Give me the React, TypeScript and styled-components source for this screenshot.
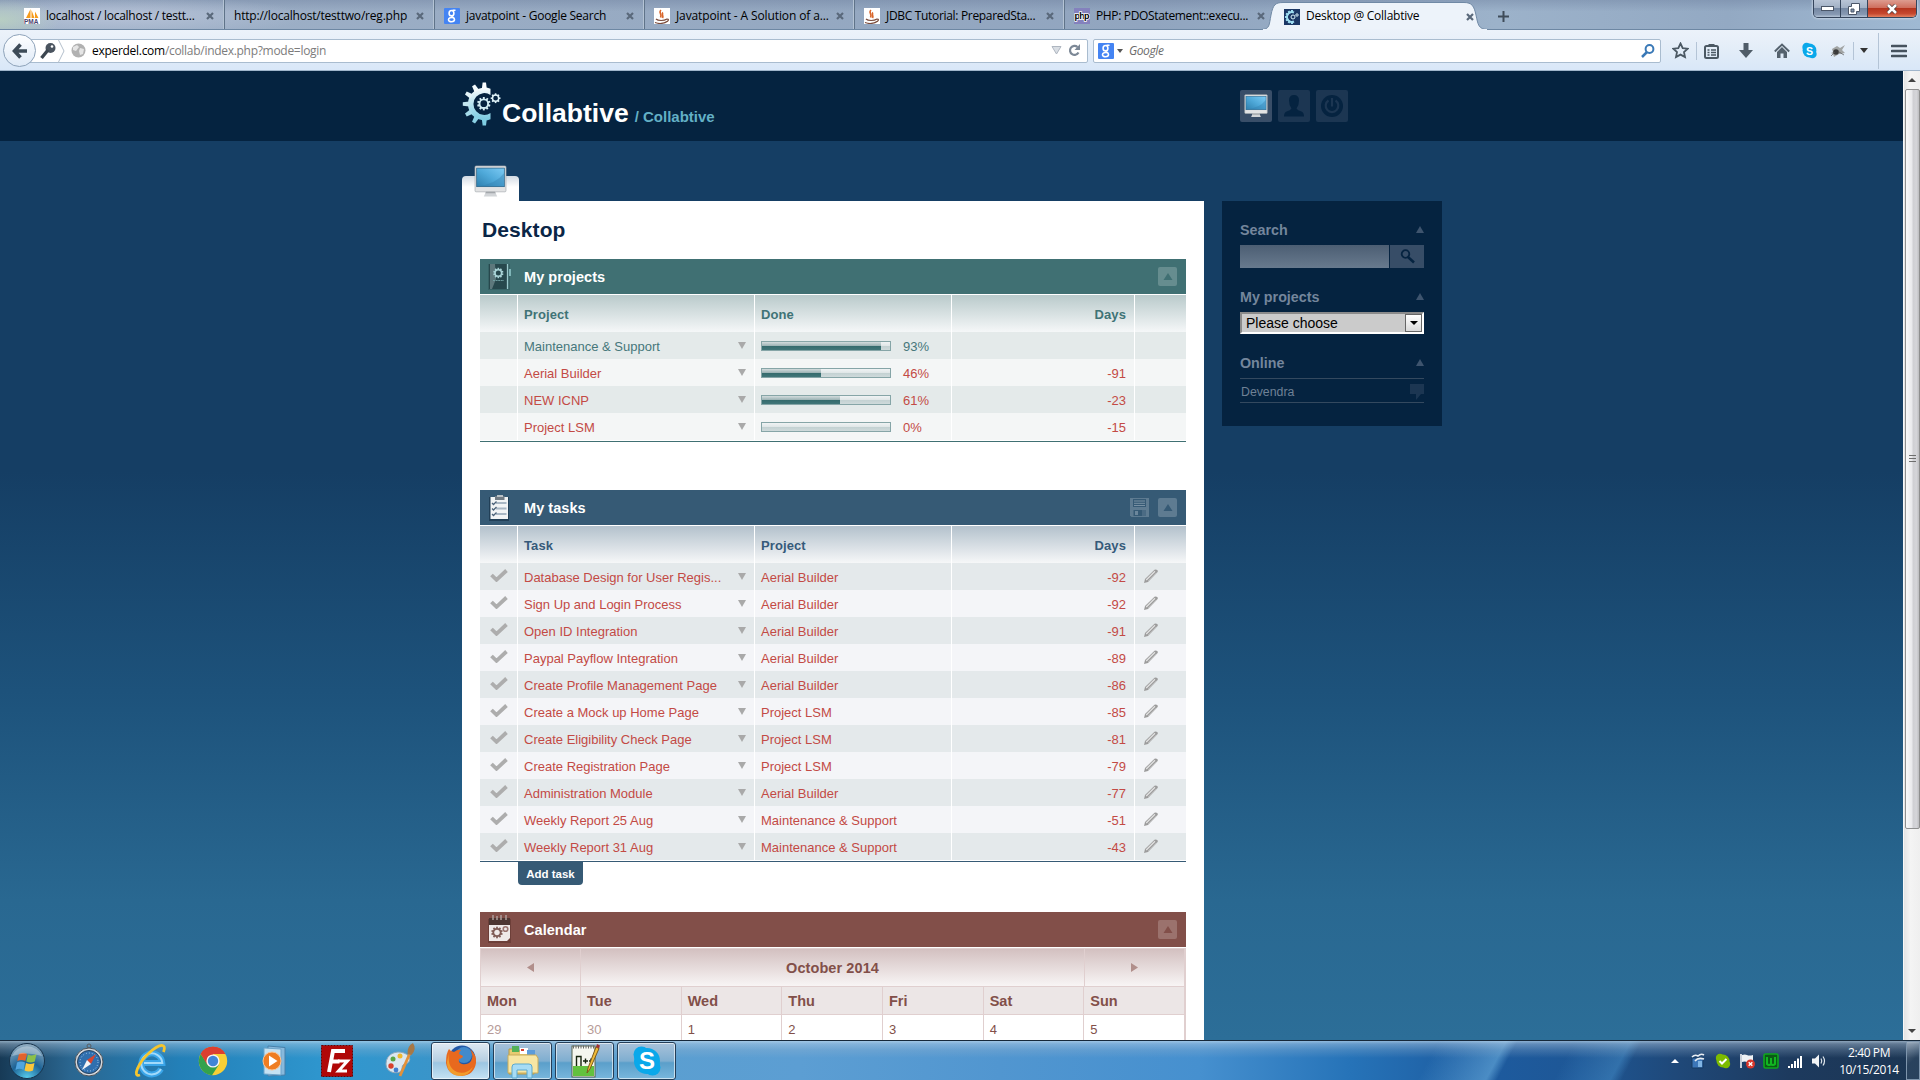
import React from "react";
import styled, { createGlobalStyle } from "styled-components";

const Global = createGlobalStyle`
  *, *::before, *::after { box-sizing: border-box; }
  html, body { margin: 0; padding: 0; overflow: hidden; }
  body { font-family: "Liberation Sans", Arial, sans-serif; font-size: 13px; }
  svg { display: block; flex: none; }
`;

const ui = `"Open Sans", "Noto Sans", sans-serif`;

const Screen = styled.div`
  width: 1920px; height: 1080px; overflow: hidden;
  display: flex; flex-direction: column;
`;

/* ---------- browser chrome ---------- */

const TabStrip = styled.div`
  height: 30px; flex: none; display: flex; position: relative;
  background:
    radial-gradient(ellipse 60px 22px at 0 20px, rgba(190,215,190,.7), transparent),
    radial-gradient(ellipse 190px 20px at 120px 16px, rgba(190,200,220,.75), transparent),
    linear-gradient(180deg, rgba(100,118,150,.35), rgba(100,118,150,0) 40%),
    linear-gradient(90deg, #9fb1c8 0, #98abc3 30%, #91a5bf 60%, #9cb2ca 78%, #93a9c3 90%, #9fb9d3 100%);
  border-bottom: 1px solid #6d87a3;
  padding-left: 15px;
`;
const Tab = styled.div`
  width: 210px; height: 29px; padding: 3px 10px 0 9px; display: flex; align-items: center;
  font: 12px ${ui}; color: #000; border-right: 1px solid #5f7389;
  box-shadow: inset -2px 0 0 -1px #b4c3d4;
`;
const LastTab = styled(Tab)`border-right: 0; box-shadow: none;`;
const ActiveTab = styled.div`
  width: 223px; height: 30px; margin-left: -6px; padding: 3px 0 0 15px; display: flex; align-items: center;
  position: relative; font: 12px ${ui}; color: #000;
`;
const ActiveShape = styled.svg`position: absolute; left: -8px; top: 1px;`;
const ActiveIcon = styled.svg`position: relative;`;
const TabText = styled.span<{ $ls?: number; $bare?: boolean }>`
  flex: 1; white-space: nowrap; padding: 0 0 2px ${p => (p.$bare ? 0 : 6)}px; position: relative; overflow: hidden;
  letter-spacing: ${p => p.$ls ?? -0.25}px;
`;
const TabClose = styled.svg`position: relative;`;
const NewTab = styled.div`display: flex; align-items: center; padding: 3px 0 0 6px;`;
const WinButtons = styled.div`
  margin-left: auto; margin-right: 3px; display: flex; width: 104px; height: 18px;
  border: 1px solid #35455c; border-top: 0; border-radius: 0 0 5px 5px; overflow: hidden;
  box-shadow: 0 0 2px 1px rgba(220,230,240,.6);
`;
const WinButton = styled.div<{ $w: number; $close?: boolean }>`
  width: ${p => p.$w}px; display: flex; align-items: center; justify-content: center;
  border-right: 1px solid #35455c;
  background: ${p => p.$close
    ? "linear-gradient(180deg,#dd9c90 0,#cf6f5e 45%,#b5351f 50%,#c6482f 80%,#e38161 100%)"
    : "linear-gradient(180deg,#b9c5d6 0,#a2b1c6 45%,#7588a3 50%,#8799b2 85%,#b5c4d7 100%)"};
  &:last-child { border-right: 0; }
`;

const Toolbar = styled.div`
  height: 41px; flex: none; display: flex; align-items: center; padding: 1px 0 0 3px;
  background: linear-gradient(180deg, #ecf2fa 0, #e3edf8 50%, #d9e7f8 100%);
  border-bottom: 1px solid #a0b5cb;
`;
const BackButton = styled.div`
  width: 33px; height: 33px; border-radius: 50%; border: 1px solid #8ea3ba; z-index: 1;
  background: linear-gradient(180deg,#fdfeff,#dfeaf7); display: flex; align-items: center; justify-content: center;
  flex: none;
`;
const UrlBar = styled.div`
  margin-left: -9px; width: 1061px; height: 24px; background: #fff; border: 1px solid #a9bccf;
  border-radius: 0 2px 2px 0; display: flex; align-items: center; padding-left: 11px; flex: none;
`;
const UrlText = styled.div`
  font: 12px ${ui}; color: #7c7c7c; letter-spacing: -0.29px; white-space: nowrap; padding-left: 6px; flex: 1;
  b { color: #000; font-weight: 400; }
`;
const SearchBox = styled.div`
  margin-left: 5px; width: 568px; height: 24px; background: #fff; border: 1px solid #a9bccf; border-radius: 2px;
  display: flex; align-items: center; padding: 0 5px 0 4px; flex: none;
`;
const SearchHint = styled.span`font: italic 12px ${ui}; color: #6c6c6c; flex: 1; padding-left: 6px; letter-spacing: -0.4px;`;
const Tools = styled.div`display: flex; align-items: center; flex: 1; padding-left: 11px; height: 38px;`;
const Sep = styled.i<{ $h: number; $l: number; $r: number }>`
  width: 1px; height: ${p => p.$h}px; margin: 0 ${p => p.$r}px 0 ${p => p.$l}px; background: #b4c4d6; flex: none;
`;
const Gap = styled.i<{ $w: number }>`width: ${p => p.$w}px; flex: none;`;

/* ---------- page ---------- */

const Viewport = styled.div`height: 969px; flex: none; display: flex; overflow: hidden;`;
const Page = styled.div`
  width: 1903px; height: 969px; overflow: hidden; flex: none;
  background: linear-gradient(180deg, #153e64 0, #153e64 400px, #1d527b 620px, #296891 830px, #2c6e98 969px);
`;
const Header = styled.header`
  height: 70px; background: #052340; display: flex; padding: 0 555px 0 462px; justify-content: space-between;
`;
const Brand = styled.div`display: flex; height: 70px; padding-top: 11px; align-items: flex-start;`;
const BrandWords = styled.div`display: flex; align-items: baseline; padding-top: 13px;`;
const BrandName = styled.div`
  font-weight: 700; font-size: 26.5px; line-height: 36px; color: #fff; margin-left: 1px;
`;
const BrandSub = styled.div`font-weight: 700; font-size: 15px; color: #63b0c6; margin-left: 6px;`;
const NavIcons = styled.nav`display: flex; gap: 6px; padding-top: 19px;`;
const NavIcon = styled.div<{ $on?: boolean }>`
  width: 32px; height: 32px; border-radius: 2px; background: ${p => (p.$on ? "#394e68" : "#1c3652")};
  display: flex; align-items: center; justify-content: center;
`;
const Columns = styled.div`display: flex; padding: 24px 0 0 462px; gap: 18px; align-items: flex-start;`;
const Main = styled.main`width: 742px; padding-top: 11px;`;
const PageTab = styled.div`
  width: 57px; height: 25px; border-radius: 4px 4px 0 0; background: linear-gradient(180deg,#d3dbe4,#fff 11px);
  padding-left: 12px;
  svg { position: relative; top: -11px; }
`;
const Panel = styled.div`background: #fff; height: 900px; padding: 16px 18px 0;`;
const PageTitle = styled.h1`margin: 0; padding-left: 2px; font-size: 21px; line-height: 26px; height: 42px; color: #0a2647; letter-spacing: .1px;`;

type Theme = { bar: string; text: string; top: string; bottom: string; odd: string; even: string; btn: string };
const teal: Theme = { bar: "#407073", text: "#407376", top: "#b9cacb", bottom: "#f5f7f8", odd: "#e4eaea", even: "#f4f6f6", btn: "#668d8f" };
const blue: Theme = { bar: "#365a75", text: "#365a7a", top: "#b3c1cc", bottom: "#f6f7f8", odd: "#e4e9eb", even: "#f4f5f8", btn: "#5e7b91" };
const brown: Theme = { bar: "#824f49", text: "#824f49", top: "#d3c0c0", bottom: "#f8f5f5", odd: "#ece6e6", even: "#fff", btn: "#9b726d" };

const Block = styled.section<{ $mb: number }>`margin-bottom: ${p => p.$mb}px;`;
const BlockBar = styled.div<{ $t: Theme }>`
  height: 35px; background: ${p => p.$t.bar}; display: flex; align-items: center; padding: 0 9px 0 4px;
`;
const BlockTitle = styled.h2`
  margin: 0; flex: 1; font-size: 14.5px; line-height: 33px; color: #fff; padding: 2px 0 0 8px; letter-spacing: .05px;
`;
const SquareBtn = styled.div<{ $t: Theme }>`
  width: 19px; height: 19px; border-radius: 2px; background: ${p => p.$t.btn}; margin-left: 9px;
  display: flex; align-items: center; justify-content: center;
`;
const Grid = styled.div<{ $t: Theme }>`margin-top: 1px; padding-bottom: 1px; border-bottom: 1px solid ${p => p.$t.bar};`;
const cols = `display: grid; grid-template-columns: 37px 236px 196px 182px 51px; gap: 0 1px;`;
const HeadRow = styled.div`${cols} height: 37px;`;
const HeadCell = styled.div<{ $t: Theme; $right?: boolean }>`
  background: linear-gradient(180deg, ${p => p.$t.top}, ${p => p.$t.bottom});
  color: ${p => p.$t.text}; font-weight: 700; line-height: 37px; padding: 1px 8px 0 6px; letter-spacing: .1px;
  text-align: ${p => (p.$right ? "right" : "left")}; height: 37px;
`;
const Row = styled.div`${cols} height: 27px;`;
const Cell = styled.div<{ $bg: string; $c: string; $center?: boolean }>`
  background: ${p => p.$bg}; color: ${p => p.$c}; height: 27px; display: flex; align-items: center;
  padding: ${p => (p.$center ? "0 0 3px 1px" : "0 8px 0 6px")}; justify-content: ${p => (p.$center ? "center" : "flex-start")};
`;
const CellText = styled.span<{ $end?: boolean }>`
  line-height: 25px; padding-top: 2px; white-space: nowrap; margin-left: ${p => (p.$end ? "auto" : "0")};
`;
const Caret = styled.i`
  margin: -1px 0 0 auto; border: solid transparent; border-width: 7px 4.5px 0; border-top-color: #a9a9a9;
`;
const PencilCell = styled(Cell)`padding: 0 0 2px 9px;`;
const Bar = styled.div`
  width: 130px; height: 10px; border: 1px solid #86a5a7; margin-right: 12px;
  background: linear-gradient(180deg, #f0f3f4 0, #dfe6e7 50%, #c3d1d2 51%, #cfdadb 100%);
`;
const BarFill = styled.div`height: 8px; background: linear-gradient(180deg, #d3dcdd 0, #9bb2b4 48%, #346a6c 50%, #417679 100%);`;
const AddTask = styled.div`
  margin-left: 38px; width: 65px; height: 23px; background: #365a75; border-radius: 0 0 4px 4px;
  color: #fff; font-weight: 700; font-size: 11.5px; line-height: 24px; text-align: center;
`;
const CalTable = styled.div`margin-top: 1px; border: 1px solid #e0cfcf; height: 120px; border-right-width: 2px;`;
const MonthRow = styled.div`
  display: grid; grid-template-columns: 99px 1fr 100px; height: 38px; border-bottom: 1px solid #e0cfcf;
  background: linear-gradient(180deg,#d3c0c0,#f8f5f5);
`;
const MonthCell = styled.div`
  display: flex; align-items: center; justify-content: center; font-weight: 700; font-size: 14.5px; color: #824f49;
  border-left: 1px solid #e0cfcf; letter-spacing: .08px; &:first-child { border-left: 0; }
`;
const Week = styled.div<{ $head?: boolean }>`
  display: grid; grid-template-columns: 99px repeat(6, 1fr); height: 28px;
  background: ${p => (p.$head ? "#ece6e6" : "#fff")};
  border-bottom: ${p => (p.$head ? "1px solid #e0cfcf" : "0")};
`;
const Day = styled.div<{ $head?: boolean; $dim?: boolean }>`
  padding: 1px 0 0 6px; line-height: 27px; border-left: 1px solid #e0cfcf; &:first-child { border-left: 0; }
  height: ${p => (p.$head ? 27 : 60)}px;
  font-weight: ${p => (p.$head ? 700 : 400)}; font-size: ${p => (p.$head ? 14.5 : 13)}px;
  color: ${p => (p.$dim ? "#b79c99" : "#824f49")};
`;

const Side = styled.aside`
  margin-top: 36px; width: 220px; height: 225px; background: #052340; padding: 17px 18px 0; color: #74869c;
`;
const SideHead = styled.div<{ $h: number }>`
  display: flex; justify-content: space-between; align-items: center; height: ${p => p.$h}px;
  font-weight: 700; font-size: 14.3px; line-height: 22px; padding-bottom: 3px;
`;
const UpMark = styled.i`border: solid transparent; border-width: 0 4.5px 7px; border-bottom-color: #3e546e; margin: 0 0 2px;`;
const SearchLine = styled.div`display: flex; gap: 1px; height: 23px; margin-bottom: 17px;`;
const SideInput = styled.div`width: 149px; background: linear-gradient(180deg,#4c5e73,#687a8e);`;
const SideGo = styled.div`width: 34px; background: #374d67; display: flex; align-items: center; justify-content: center;`;
const Select = styled.div`
  height: 22px; background: #cbcbcb; border: 2px solid; border-color: #8b8b8b #fff #fff #8b8b8b; color: #000;
  display: flex; align-items: center; justify-content: space-between; font-size: 14px; padding-left: 4px; margin-bottom: 17px;
`;
const SelectBtn = styled.div`
  width: 17px; height: 18px; background: linear-gradient(180deg,#fff,#d9d9d9); border: 1px solid #666;
  display: flex; align-items: center; justify-content: center;
`;
const User = styled.div`
  border: solid #34495f; border-width: 1px 0; height: 25px; display: flex; align-items: center; justify-content: space-between;
  font-size: 12.3px; color: #6f8196; padding: 2px 0 0 1px;
`;

const Scroll = styled.div`
  width: 17px; background: linear-gradient(90deg,#e4e4e4,#f4f4f4 40%,#efefef); display: flex; flex-direction: column; align-items: center;
  border-left: 1px solid #f8f8f8;
`;
const ScrollEnd = styled.div`height: 18px; display: flex; align-items: center;`;
const Thumb = styled.div`
  width: 15px; height: 740px; border: 1px solid #8f8f8f; border-radius: 2px;
  background: linear-gradient(90deg,#fafafa 0,#e9e9ec 45%,#cfcfd3 55%,#d5d5d9 80%,#bdbdc0 100%);
  display: flex; align-items: center; justify-content: center;
`;
const ScrollSpace = styled.div`flex: 1;`;

/* ---------- taskbar ---------- */

const TaskBar = styled.div`
  height: 40px; flex: none; display: flex; align-items: center; border-top: 1px solid #16283a;
  background:
    linear-gradient(180deg, rgba(200,222,240,.65) 0, rgba(190,210,230,.42) 3px, rgba(160,185,210,.25) 9px, transparent 17px),
    linear-gradient(118deg, transparent 1270px, rgba(120,190,235,.5) 1330px, transparent 1340px, transparent 1390px, rgba(80,160,220,.4) 1440px, transparent 1450px),
    linear-gradient(90deg, #173a56 0, #2a6690 70px, #2380b8 180px, #2f97cf 330px, #3c94c8 460px, #5a9fd0 600px, #5c9ed3 800px, #5196d0 1000px, #4690cf 1200px, #2673b8 1350px, #1d5b9f 1480px, #1e5796 1580px, #1f4878 1680px, #1d3a5e 1790px, #1c3653 1920px);
`;
const Launch = styled.div<{ $w: number }>`width: ${p => p.$w}px; display: flex; justify-content: center; align-items: center; flex: none;`;
const Running = styled.div<{ $on?: boolean }>`
  width: 59px; height: 38px; margin-right: 3px; border: 1px solid #243e58; border-radius: 3px; flex: none;
  box-shadow: inset 0 0 0 1px rgba(255,255,255,.6);
  background: ${p => (p.$on ? "linear-gradient(180deg,#dfe9f2 0,#b6cfe2 50%,#9cc6e2 55%,#c5e2f3 100%)" : "linear-gradient(180deg,#a9c2da 0,#7faed0 50%,#5b9fca 55%,#79b7dd 100%)")};
  display: flex; align-items: center; justify-content: center;
`;
const Tray = styled.div`margin-left: auto; display: flex; align-items: center; gap: 8px;`;
const Clock = styled.div`
  font: 12px ${ui}; color: #fff; text-align: center; line-height: 17px; letter-spacing: -0.4px; width: 68px; margin: 0 -5px 0 0; white-space: nowrap;
`;
const ShowDesktop = styled.div`
  width: 14px; height: 39px; border: 1px solid #7e95ad; background: linear-gradient(135deg, rgba(255,255,255,.3), rgba(255,255,255,.06) 50%);
`;

/* ---------- icons ---------- */

const CloseX = () => (
  <TabClose width="8" height="8" viewBox="0 0 8 8"><path d="M1 1l6 6M7 1L1 7" stroke="#5a697b" strokeWidth="2.2" /></TabClose>
);
const gearTeeth = (n: number, r: number, w: number, h: number, from = 0, to = 360) =>
  Array.from({ length: n }, (_, i) => from + ((to - from) * i) / (to - from === 360 ? n : n - 1)).map(a => (
    <rect key={a} x={-w / 2} y={-r} width={w} height={h} transform={`rotate(${a})`} />
  ));
const bigTeeth: [number, string][] = [
  [0, "#fafdfe"], [-30, "#f3fafc"], [-59, "#e3f3f8"], [-90, "#c3e6f0"], [-121, "#a4dbea"], [-150, "#8bd1e5"], [-180, "#7fcde2"],
];
const Gears = ({ size = 39 }: { size?: number }) => (
  <svg width={size} height={(size * 44) / 39} viewBox="0 0 39 44">
    <defs><linearGradient id="gg" gradientUnits="userSpaceOnUse" x1="0" y1="-17" x2="0" y2="17"><stop stopColor="#fafdfe" /><stop offset="1" stopColor="#76c9e0" /></linearGradient></defs>
    <g transform="translate(22.3 22)">
      <path d="M6.200 -15.200A16.400 16.400 0 1 0 6.200 15.200V9A10.900 10.900 0 1 1 6.200 -9Z" fill="url(#gg)" />
      {bigTeeth.map(([a, c]) => <path key={a} d="M-2.500 -15L-1.700 -21.500H1.700L2.500 -15Z" fill={c} transform={`rotate(${a})`} />)}
    </g>
    <g transform="translate(21.800 21.700)" fill="#d9eff5">{gearTeeth(10, 6.700, 1.900, 2.500)}<circle r="4.300" fill="none" stroke="#cdeaf2" strokeWidth="1.900" /></g>
    <g transform="translate(33.600 16.200)" fill="#dff2f7">{gearTeeth(8, 4.900, 1.600, 2)}<circle r="3.100" fill="none" stroke="#dff2f7" strokeWidth="1.500" /></g>
  </svg>
);
const Monitor = ({ s }: { s: number }) => (
  <svg width={s} height={s} viewBox="0 0 32 32">
    <defs><linearGradient id="mon" x1="0" y1="1" x2="1" y2="0"><stop stopColor="#2e7fae" /><stop offset=".5" stopColor="#4fa9d9" /><stop offset="1" stopColor="#7dcbf5" /></linearGradient></defs>
    <path d="M12 25h8l2.5 5.5h-13z" fill="#d2d5d8" /><path d="M12 25h8l1 2.5h-10z" fill="#a1a5a9" />
    <rect x="1" y="1" width="30" height="25" rx="1" fill="#e2e3e4" stroke="#a9aeb3" strokeWidth=".7" />
    <rect x="2.6" y="3" width="26.8" height="18" fill="url(#mon)" stroke="#245f85" strokeWidth=".7" />
    <path d="M3 20.5Q21 19 29 8V20.5z" fill="#2d78a8" opacity=".35" />
  </svg>
);
const Java = () => (
  <svg width="16" height="16" viewBox="0 0 16 16"><rect width="16" height="16" fill="#fff" />
    <path d="M7 2C4 4.5 8.5 6 6.5 9.5M9 4.5C7 6 10 7.5 8.5 10" stroke="#d9662b" strokeWidth="1.6" fill="none" />
    <path d="M2 11c2 2 8 2 11 0 2 0 2 2-1 3M1 14.5c4 1.5 9 1.2 13-1.5" stroke="#7a4b3b" strokeWidth="1.2" fill="none" /></svg>
);
const GoogleG = () => (
  <svg width="16" height="16" viewBox="0 0 16 16"><rect width="16" height="16" rx="1" fill="#4484f3" />
    <g fill="none" stroke="#fff" strokeWidth="1.6"><ellipse cx="7.5" cy="5.2" rx="2.4" ry="2.7" /><path d="M8.500 2.200h3M8.500 8c-2 1 2 1.200 2 3.400 0 3-6 3-6 .3 0-2 3-2.300 4-2" /></g></svg>
);
const Pma = () => (
  <svg width="16" height="16" viewBox="0 0 16 16"><rect width="16" height="16" fill="#fff" />
    <path d="M2 10L6.500 1v9zM7.500 10V2l3 8zM11 10V3.500l3.500 6.500z" fill="#f59b1c" />
    <text x="0" y="15.500" fontFamily="Liberation Sans" fontWeight="700" fontSize="6.500" fill="#4b4470">PMA</text></svg>
);
const Php = () => (
  <svg width="16" height="16" viewBox="0 0 16 16"><rect width="16" height="16" fill="#8481bd" />
    <text x="0.500" y="11" fontFamily="Liberation Sans" fontWeight="700" fontSize="9" textLength="15" fill="#000" stroke="#fff" strokeWidth="1.600" paintOrder="stroke">php</text></svg>
);
const SkypeS = ({ s, fs }: { s: number; fs: number }) => (
  <svg width={s} height={s} viewBox="0 0 32 32">
    <circle cx="16" cy="16" r="13" fill="#0aa8ea" /><circle cx="10.500" cy="9.500" r="8" fill="#0aa8ea" /><circle cx="21.500" cy="22.500" r="8" fill="#0aa8ea" />
    <text x="16" y="24" textAnchor="middle" fontFamily="Liberation Sans" fontWeight="700" fontSize={fs} fill="#fff">S</text>
  </svg>
);
const Check = () => (
  <svg width="18" height="13" viewBox="0 0 18 13"><path d="M1.500 6l5 4.800L16.500 1.500" fill="none" stroke="#adadad" strokeWidth="3.800" /></svg>
);
const Pencil = () => (
  <svg width="14" height="14" viewBox="0 0 14 14">
    <path d="M0 14l1-4L10.500.8Q12 0 13.200 1T13.200 3.500L4 13z" fill="#9c9c9c" />
    <path d="M2.200 11L11 2.300" stroke="#e2e2e2" strokeWidth="1.300" /><path d="M4 12l8.300-8.300" stroke="#bdbdbd" strokeWidth=".8" />
  </svg>
);
const BinderIcon = () => (
  <svg width="32" height="33" viewBox="0 0 32 33">
    <rect x="4" y="4" width="22" height="26" fill="#2b5357" opacity=".5" />
    <rect x="5" y="4" width="19" height="25" fill="#27484d" /><path d="M6 4h5l1 15L8 29H6z" fill="#6b8588" opacity=".8" />
    <path d="M23.500 4v25" stroke="#9bc9cc" strokeWidth="1.300" /><path d="M25 9h2v7h-2z" fill="#7fb5b8" />
    <g transform="translate(14.300 13)" fill="#a9d4d7">{gearTeeth(10, 5.200, 1.600, 2)}<circle r="3.300" fill="none" stroke="#a9d4d7" strokeWidth="1.600" /></g>
    <path d="M9 20.500h11" stroke="#6f9da0" strokeWidth="1.200" strokeDasharray="2 .6" />
  </svg>
);
const ClipIcon = () => (
  <svg width="32" height="33" viewBox="0 0 32 33">
    <rect x="5" y="6" width="20" height="24" fill="#18334a" opacity=".7" /><rect x="6.500" y="6" width="17.500" height="22" fill="#f2f4f5" />
    <path d="M11 5h9.500v4H11z" fill="#717b84" /><path d="M13 4h6v2h-6z" fill="#b9c0c5" />
    {[12, 17.500, 23].map(y => <g key={y}><path d={`M12 ${y}h10.500`} stroke="#a9b7c4" strokeWidth="2" /><path d={`M8 ${y}l1.500 1.500 3-3`} stroke="#4b6279" strokeWidth="1.300" fill="none" /></g>)}
  </svg>
);
const CalIcon = () => (
  <svg width="32" height="33" viewBox="0 0 32 33">
    <rect x="4" y="6" width="23" height="24" fill="#4d2824" opacity=".4" />
    <rect x="5" y="5" width="21" height="8" fill="#4d3532" /><path d="M5 12h21v13l-3 3H5z" fill="#efe9e9" />
    <path d="M9 2v5M13 3v4M17 2v5M22 2v5" stroke="#ad9e9c" strokeWidth="1.500" />
    <g transform="translate(13 19.500)" fill="#7f5a55">{gearTeeth(10, 5.800, 1.700, 2)}<circle r="3.700" fill="none" stroke="#7f5a55" strokeWidth="1.800" /></g>
    <circle cx="21.500" cy="16" r="2.300" fill="none" stroke="#9a7470" strokeWidth="1.600" />
  </svg>
);
const Floppy = () => (
  <svg width="19" height="19" viewBox="0 0 19 19"><path d="M0 0h19v19H1.500L0 17.500z" fill="#5e7b91" />
    <rect x="3" y="1" width="13" height="8" fill="#365a75" /><path d="M4 3h11M4 5.300h11M4 7.500h11" stroke="#7890a3" />
    <rect x="3.500" y="12" width="12" height="6" fill="#365a75" /><rect x="5" y="13" width="3" height="4" fill="#6b869b" /><rect x="12" y="12" width="3.500" height="6" fill="#4b6b84" /></svg>
);
const Tri = ({ d, c, w = 10, h = 7 }: { d: string; c: string; w?: number; h?: number }) => (
  <svg width={w} height={h} viewBox={`0 0 ${w} ${h}`}><path d={d} fill={c} /></svg>
);
const Folded = ({ t }: { t: Theme }) => <SquareBtn $t={t}><Tri d="M5 0L9.500 7H.5z" c={t.bar} /></SquareBtn>;

const StartOrb = () => (
  <svg width="38" height="38" viewBox="0 0 38 38">
    <defs><radialGradient id="orb" cx=".5" cy="1" r=".95"><stop stopColor="#5ad0ef" /><stop offset=".5" stopColor="#1d6396" /><stop offset="1" stopColor="#8ba9bf" /></radialGradient></defs>
    <circle cx="19" cy="19" r="17.500" fill="url(#orb)" stroke="#17334c" />
    <path d="M11 12q4-2.500 8 0l-1.700 7q-4-2-8 0z" fill="#e2622c" /><path d="M20 12.500q4 2 8.500-.5l-1.700 7.500q-4 2-8.500 0z" fill="#8cc04a" />
    <path d="M9 20.500q4-2 8 0L15.500 28q-4-2.500-8 0z" fill="#51a5e0" /><path d="M18 21q4 2 8.500 0L25 28.500q-4 2-8.500 0z" fill="#fbc63b" />
    <path d="M4 14A16 15 0 0 1 34 14Q19 9 4 14z" fill="#fff" opacity=".3" />
  </svg>
);
const Safari = () => (
  <svg width="32" height="38" viewBox="0 0 32 38"><circle cx="16" cy="4" r="2" fill="none" stroke="#595c60" /><circle cx="16" cy="20" r="14" fill="#d5d8dc" stroke="#4d5359" />
    <circle cx="16" cy="20" r="11.500" fill="#2f6fae" stroke="#26425f" /><circle cx="16" cy="20" r="9" fill="none" stroke="#a9cdee" strokeDasharray="1 2" />
    <path d="M23 12l-5 10-4-4z" fill="#d8452f" /><path d="M9 28l5-10 4 4z" fill="#f2f4f6" /></svg>
);
const IE = () => (
  <svg width="34" height="38" viewBox="0 0 34 38">
    <path d="M27 27a10.500 10.500 0 1 1 1.300-6H10" fill="none" stroke="#3aa5e8" strokeWidth="6" /><path d="M27 27a10.500 10.500 0 1 1 1.300-6H10" fill="none" stroke="#a2dafa" strokeWidth="2" />
    <path d="M6 33C-2 36 4 21 15 11S33 1 29.500 10" fill="none" stroke="#f5c52e" strokeWidth="2.800" /></svg>
);
const Chrome = () => (
  <svg width="30" height="38" viewBox="0 0 30 38"><g transform="translate(15 19)">
    <circle r="14.200" fill="#f7cf36" /><path d="M0 0L-12.300-7.100A14.200 14.200 0 0 1 12.300-7.100H0z" fill="#dc3f30" /><path d="M-12.300-7.100A14.200 14.200 0 0 0-1 14.200L6 3.500-5.500 3z" fill="#33a24c" />
    <path d="M-12.300-7.100L-5.500 4 0-7h12.300A14 14 0 0 0-12.300-7.100" fill="#dc3f30" /><circle r="6.600" fill="#f5f5f5" /><circle r="5.200" fill="#4185d6" /></g></svg>
);
const Wmp = () => (
  <svg width="32" height="34" viewBox="0 0 32 34"><path d="M9 2l17 1.500V31L9 32z" fill="#88b9dc" stroke="#477fa9" /><path d="M5 4l17 1v26L5 30z" fill="#c5e2f3" stroke="#6ca4ca" />
    <circle cx="13" cy="17" r="9" fill="#ef7d22" /><circle cx="13" cy="17" r="9" fill="none" stroke="#fbc291" /><path d="M10 11.500v11l8.500-5.500z" fill="#fff" /></svg>
);
const Filezilla = () => (
  <svg width="32" height="32" viewBox="0 0 32 32"><rect x=".5" y=".5" width="31" height="31" fill="#b00808" stroke="#6d0000" strokeDasharray="2 1" />
    <path d="M8 27L12 6h12M9.500 16.500h9" stroke="#fff" strokeWidth="4" fill="none" /><path d="M17 16h9.500L17.500 26H26" stroke="#fff" strokeWidth="3" fill="none" /></svg>
);
const Paint = () => (
  <svg width="34" height="38" viewBox="0 0 34 38"><path d="M3 22C3 12 13 8 21 11s7 10 1 11c-4 1-2 4-4 7S3 32 3 22z" fill="#dbe7f0" stroke="#8fa8bb" />
    <circle cx="8" cy="24" r="2.700" fill="#d8402c" /><circle cx="10" cy="17" r="2.500" fill="#5aa646" /><circle cx="17" cy="14" r="2.500" fill="#f0b92e" /><circle cx="13" cy="28" r="2.400" fill="#3f7fd0" />
    <path d="M17 34L27 11" stroke="#e3913a" strokeWidth="2.800" /><path d="M24.500 12Q24 4 30 1q4 6-1.500 12z" fill="#a77847" /></svg>
);
const Firefox = () => (
  <svg width="32" height="36" viewBox="0 0 32 36"><circle cx="17" cy="16" r="13.500" fill="#2257a5" /><circle cx="19" cy="12" r="8" fill="#4e9fdc" opacity=".7" />
    <path d="M4 6q2 3 5 3 4-3 7-2-2 2-2 4l4 2q0 2-4 3-1 4 3 5 6 1 9-3 3-5-1-12 7 6 6 14-2 12-14 13Q3 33 1 20 1 10 4 6z" fill="#e8691e" />
    <path d="M4 10q-2 15 8 19 9 3 16-5-4 9-13 9Q2 32 2 19z" fill="#f7b231" opacity=".7" /></svg>
);
const Explorer = () => (
  <svg width="34" height="36" viewBox="0 0 34 36"><path d="M3 6h7l2 2h14l2 3v20H3z" fill="#e7cb72" stroke="#b99a45" /><path d="M6 3h7v6H6z" fill="#53b158" /><path d="M14 5h8v6h-8z" fill="#fff" /><path d="M15 6h3v2h-3z" fill="#d5402f" /><path d="M21 7h8v5h-8z" fill="#5b9bda" />
    <path d="M2 12h28l2 3v15H2z" fill="#f7e6a4" stroke="#c9ab5a" /><path d="M6 35V24q0-3 3-3h14q3 0 3 3v11h-5v-8H11v8z" fill="#a7dcf5" stroke="#5ba9cf" /></svg>
);
const Notepad = () => (
  <svg width="30" height="38" viewBox="0 0 30 38"><rect x="2" y="4" width="23" height="31" fill="#f5f6ef" stroke="#56634f" /><path d="M3 24h21v10H3z" fill="#62c13f" /><path d="M3 5h21" stroke="#6b6b6b" strokeWidth="3" strokeDasharray="1 1.500" />
    <path d="M6.500 24V14.500h4.500V24M13 19h5M15.500 16.500v5M19 19h4M21 16.500v5" stroke="#16240f" strokeWidth="1.400" fill="none" /><path d="M17 31l1-5L26 5l3 1.500L20 27z" fill="#f0bb38" stroke="#7b5a1c" /><path d="M26 5l1-3 3 1.500-1 3z" fill="#a23231" /></svg>
);

const projects = [
  { n: "Maintenance & Support", p: 93, d: "", late: false },
  { n: "Aerial Builder", p: 46, d: "-91", late: true },
  { n: "NEW ICNP", p: 61, d: "-23", late: true },
  { n: "Project LSM", p: 0, d: "-15", late: true },
];
const tasks: [string, string, string][] = [
  ["Database Design for User Regis...", "Aerial Builder", "-92"],
  ["Sign Up and Login Process", "Aerial Builder", "-92"],
  ["Open ID Integration", "Aerial Builder", "-91"],
  ["Paypal Payflow Integration", "Aerial Builder", "-89"],
  ["Create Profile Management Page", "Aerial Builder", "-86"],
  ["Create a Mock up Home Page", "Project LSM", "-85"],
  ["Create Eligibility Check Page", "Project LSM", "-81"],
  ["Create Registration Page", "Project LSM", "-79"],
  ["Administration Module", "Aerial Builder", "-77"],
  ["Weekly Report 25 Aug", "Maintenance & Support", "-51"],
  ["Weekly Report 31 Aug", "Maintenance & Support", "-43"],
];
const late = "#c34a45";

const Head = ({ t, a, b }: { t: Theme; a: string; b: string }) => (
  <HeadRow>
    <HeadCell $t={t} /><HeadCell $t={t}>{a}</HeadCell><HeadCell $t={t}>{b}</HeadCell><HeadCell $t={t} $right>Days</HeadCell><HeadCell $t={t} />
  </HeadRow>
);

export default function App() {
  return (
    <Screen>
      <Global />
      <TabStrip>
        <Tab><Pma /><TabText>localhost / localhost / testt...</TabText><CloseX /></Tab>
        <Tab><TabText $bare $ls={-0.2}>http://localhost/testtwo/reg.php</TabText><CloseX /></Tab>
        <Tab><GoogleG /><TabText>javatpoint - Google Search</TabText><CloseX /></Tab>
        <Tab><Java /><TabText $ls={-0.12}>Javatpoint - A Solution of a...</TabText><CloseX /></Tab>
        <Tab><Java /><TabText $ls={-0.32}>JDBC Tutorial: PreparedSta...</TabText><CloseX /></Tab>
        <LastTab><Php /><TabText $ls={-0.35}>PHP: PDOStatement::execu...</TabText><CloseX /></LastTab>
        <ActiveTab>
          <ActiveShape width="233" height="29" viewBox="0 0 233 29">
            <path d="M0 28.500C9 28.500 8 24 10 14S14 1.500 22 1.500H203C211 1.500 213 5 215 14S217 28.500 227 28.500V29H0z" fill="#edf3fa" stroke="#7089a5" />
            <path d="M2 29h224" stroke="#ecf2fa" strokeWidth="2" />
          </ActiveShape>
          <ActiveIcon width="16" height="16" viewBox="0 0 16 16"><rect width="16" height="16" fill="#1b3765" /><g transform="translate(8 8)" fill="#9edcf0">{gearTeeth(7, 7, 2, 3, -180, 0)}<path d="M2-4.500A5 5 0 1 0 2 4.500" fill="none" stroke="#9edcf0" strokeWidth="2" /><circle r="2" cx="1" fill="none" stroke="#d8f2fa" /><circle cx="5" cy="-2" r="1.200" fill="none" stroke="#d8f2fa" /></g></ActiveIcon>
          <TabText>Desktop @ Collabtive</TabText>
          <CloseX /><Gap $w={18} />
        </ActiveTab>
        <NewTab><svg width="11" height="11" viewBox="0 0 11 11"><path d="M5.500 0v11M0 5.500h11" stroke="#3f4c5a" strokeWidth="2" /></svg></NewTab>
        <WinButtons>
          <WinButton $w={28}><svg width="13" height="5" viewBox="0 0 13 5"><rect x=".5" y=".5" width="12" height="4" fill="#fff" stroke="#4b5668" /></svg></WinButton>
          <WinButton $w={27}><svg width="12" height="12" viewBox="0 0 12 12"><path d="M3.500.5h8v8h-3v3h-8v-8h3z" fill="#fff" stroke="#4b5668" /><path d="M3 6h3v3H3z" fill="#8192ab" stroke="#4b5668" /></svg></WinButton>
          <WinButton $w={49} $close><svg width="12" height="10" viewBox="0 0 12 10"><path d="M2 1l8 8M10 1L2 9" stroke="#4b3a3a" strokeWidth="4" /><path d="M2 1l8 8M10 1L2 9" stroke="#fff" strokeWidth="2.500" /></svg></WinButton>
        </WinButtons>
      </TabStrip>

      <Toolbar>
        <BackButton><svg width="16" height="16" viewBox="0 0 16 16"><path d="M8.500 1.500L2.500 8l6 6.500M3 8h12" stroke="#3d4b58" strokeWidth="3.600" fill="none" /></svg></BackButton>
        <UrlBar>
          <svg width="18" height="18" viewBox="0 0 18 18"><circle cx="11.500" cy="6" r="5" fill="#4a545f" /><circle cx="13" cy="4.500" r="1.300" fill="#fff" /><path d="M9 8L2.500 16" stroke="#3c4650" strokeWidth="3.400" /></svg>
          <svg width="8" height="24" viewBox="0 0 8 24"><path d="M1 0l6 12-6 12" fill="none" stroke="#b3bfcb" /></svg>
          <Gap $w={6} />
          <svg width="15" height="15" viewBox="0 0 15 15"><circle cx="7.500" cy="7.500" r="7" fill="#b1b1b1" /><path d="M2 4l4-2 2 2-3 4-3-1zM9 5l4 1-1 5-3 1-1-4z" fill="#e5e5e5" /></svg>
          <UrlText><b>experdel.com</b>/collab/index.php?mode=login</UrlText>
          <svg width="11" height="9" viewBox="0 0 11 9"><path d="M1 .5h9L5.500 8z" fill="#d9dee4" stroke="#aeb6c0" /></svg>
          <Gap $w={6} />
          <svg width="13" height="13" viewBox="0 0 13 13"><path d="M10.500 8.500A4.500 4.500 0 1 1 9.500 3" fill="none" stroke="#7c8896" strokeWidth="2.200" /><path d="M12 0v6H6.500z" fill="#7c8896" /></svg>
          <Gap $w={6} />
        </UrlBar>
        <SearchBox>
          <GoogleG /><Gap $w={3} /><Tri w={6} h={4} d="M0 0h6L3 4z" c="#555" />
          <SearchHint>Google</SearchHint>
          <svg width="14" height="14" viewBox="0 0 14 14"><circle cx="8.500" cy="5" r="3.900" fill="none" stroke="#3a79b7" strokeWidth="2" /><path d="M6 8l-5 5" stroke="#3a79b7" strokeWidth="2.500" /></svg>
        </SearchBox>
        <Tools>
          <svg width="17" height="17" viewBox="0 0 17 17"><path d="M8.500 1.500l2.200 4.600 5 .6-3.700 3.400 1 5-4.500-2.500L4 15.100l1-5L1.300 6.700l5-.6z" fill="none" stroke="#4b5863" strokeWidth="1.800" /></svg>
          <Sep $h={18} $l={7} $r={7} />
          <svg width="15" height="16" viewBox="0 0 15 16"><rect x="1" y="3" width="13" height="12" rx="1.500" fill="none" stroke="#4b5863" strokeWidth="2" /><path d="M4.500 1h6v3h-6z" fill="#4b5863" /><path d="M3.500 7h2M7 7h5M3.500 9.500h2M7 9.500h5M3.500 12h2M7 12h5" stroke="#4b5863" strokeWidth="1.300" /></svg>
          <Gap $w={20} />
          <svg width="14" height="15" viewBox="0 0 14 15"><path d="M4.500 0h5v7H14l-7 8-7-8h4.500z" fill="#4f5c68" /></svg>
          <Gap $w={21} />
          <svg width="16" height="15" viewBox="0 0 16 15"><path d="M.8 8.500L8 1.500l7.200 7" fill="none" stroke="#55626e" strokeWidth="1.900" /><path d="M3 9l5-5 5 5v6H9.500v-4.500h-3V15H3z" fill="#55626e" /></svg>
          <Gap $w={11} />
          <SkypeS s={17} fs={20} />
          <Gap $w={12} />
          <svg width="16" height="14" viewBox="0 0 16 14"><path d="M2 5l5-3 3 2 5-3-3 5 3 3-6 1-5 3-1-3-2-1 2-1z" fill="#8c8c88" opacity=".75" /><circle cx="6" cy="8" r="2.800" fill="#3b3b3b" /><path d="M1 12l4-4M14 11l-5-3" stroke="#555" strokeWidth=".7" /></svg>
          <Sep $h={18} $l={7} $r={6} />
          <Tri w={8} h={5} d="M0 0h8L4 5z" c="#333" />
          <Sep $h={36} $l={10} $r={12} />
          <svg width="16" height="14" viewBox="0 0 16 14"><path d="M1 2h14M1 7h14M1 12h14" stroke="#46525e" strokeWidth="2.600" strokeLinecap="round" /></svg>
        </Tools>
      </Toolbar>

      <Viewport>
        <Page>
          <Header>
            <Brand>
              <Gears />
              <BrandWords><BrandName>Collabtive</BrandName><BrandSub>/ Collabtive</BrandSub></BrandWords>
            </Brand>
            <NavIcons>
              <NavIcon $on><Monitor s={24} /></NavIcon>
              <NavIcon><svg width="22" height="24" viewBox="0 0 22 24"><path d="M11 1q5 0 5 5.500 0 5-2.500 8 1 2 5 3 2.500 1 2.500 5H1q0-4 2.500-5 4-1 5-3Q6 11.500 6 6.500 6 1 11 1z" fill="#052340" /></svg></NavIcon>
              <NavIcon><svg width="24" height="24" viewBox="0 0 24 24"><circle cx="12" cy="12" r="11" fill="#052340" /><path d="M8.500 6.500A6.300 6.300 0 1 0 15.500 6.500M12 4v8.500" fill="none" stroke="#1c3652" strokeWidth="2.200" /></svg></NavIcon>
            </NavIcons>
          </Header>
          <Columns>
            <Main>
              <PageTab><Monitor s={33} /></PageTab>
              <Panel>
                <PageTitle>Desktop</PageTitle>
                <Block $mb={48}>
                  <BlockBar $t={teal}><BinderIcon /><BlockTitle>My projects</BlockTitle><Folded t={teal} /></BlockBar>
                  <Grid $t={teal}>
                    <Head t={teal} a="Project" b="Done" />
                    {projects.map((r, i) => {
                      const bg = i % 2 ? teal.even : teal.odd;
                      const c = r.late ? late : "#46777b";
                      return (
                        <Row key={r.n}>
                          <Cell $bg={bg} $c={c} />
                          <Cell $bg={bg} $c={c}><CellText>{r.n}</CellText><Caret /></Cell>
                          <Cell $bg={bg} $c={c}><Bar><BarFill style={{ width: `${r.p}%` }} /></Bar><CellText>{r.p}%</CellText></Cell>
                          <Cell $bg={bg} $c={c}><CellText $end>{r.d}</CellText></Cell>
                          <Cell $bg={bg} $c={c} />
                        </Row>
                      );
                    })}
                  </Grid>
                </Block>
                <Block $mb={27}>
                  <BlockBar $t={blue}><ClipIcon /><BlockTitle>My tasks</BlockTitle><Floppy /><Folded t={blue} /></BlockBar>
                  <Grid $t={blue}>
                    <Head t={blue} a="Task" b="Project" />
                    {tasks.map(([n, p, d], i) => {
                      const bg = i % 2 ? blue.even : blue.odd;
                      return (
                        <Row key={n}>
                          <Cell $bg={bg} $c={late} $center><Check /></Cell>
                          <Cell $bg={bg} $c={late}><CellText>{n}</CellText><Caret /></Cell>
                          <Cell $bg={bg} $c={late}><CellText>{p}</CellText></Cell>
                          <Cell $bg={bg} $c={late}><CellText $end>{d}</CellText></Cell>
                          <PencilCell $bg={bg} $c={late}><Pencil /></PencilCell>
                        </Row>
                      );
                    })}
                  </Grid>
                  <AddTask>Add task</AddTask>
                </Block>
                <Block $mb={0}>
                  <BlockBar $t={brown}><CalIcon /><BlockTitle>Calendar</BlockTitle><Folded t={brown} /></BlockBar>
                  <CalTable>
                    <MonthRow>
                      <MonthCell><Tri w={7} h={9} d="M7 0v9L0 4.500z" c="#b18f8b" /></MonthCell>
                      <MonthCell>October 2014</MonthCell>
                      <MonthCell><Tri w={7} h={9} d="M0 0v9l7-4.500z" c="#b18f8b" /></MonthCell>
                    </MonthRow>
                    <Week $head>{["Mon", "Tue", "Wed", "Thu", "Fri", "Sat", "Sun"].map(d => <Day key={d} $head>{d}</Day>)}</Week>
                    <Week>{[29, 30, 1, 2, 3, 4, 5].map(d => <Day key={d} $dim={d > 28}>{d}</Day>)}</Week>
                  </CalTable>
                </Block>
              </Panel>
            </Main>
            <Side>
              <SideHead $h={27}>Search<UpMark /></SideHead>
              <SearchLine>
                <SideInput />
                <SideGo><svg width="15" height="15" viewBox="0 0 15 15"><circle cx="5.500" cy="5" r="3.800" fill="none" stroke="#052340" strokeWidth="1.800" /><path d="M8 8l6 5.500" stroke="#052340" strokeWidth="2.600" /></svg></SideGo>
              </SearchLine>
              <SideHead $h={27}>My projects<UpMark /></SideHead>
              <Select>Please choose<SelectBtn><Tri w={8} h={4} d="M0 0h8L4 4z" c="#000" /></SelectBtn></Select>
              <SideHead $h={27}>Online<UpMark /></SideHead>
              <User>Devendra<svg width="14" height="16" viewBox="0 0 14 16"><path d="M0 0h14v10h-3l-5 6v-6H0z" fill="#1c3652" /></svg></User>
            </Side>
          </Columns>
        </Page>
        <Scroll>
          <ScrollEnd><Tri w={8} h={4} d="M4 0l4 4H0z" c="#444" /></ScrollEnd>
          <Thumb><svg width="7" height="8" viewBox="0 0 7 8"><path d="M0 .5h7M0 3.500h7M0 6.500h7" stroke="#6e6e6e" /></svg></Thumb>
          <ScrollSpace />
          <ScrollEnd><Tri w={8} h={4} d="M0 0h8L4 4z" c="#444" /></ScrollEnd>
        </Scroll>
      </Viewport>

      <TaskBar>
        <Launch $w={54}><StartOrb /></Launch>
        <Gap $w={4} />
        <Launch $w={62}><Safari /></Launch>
        <Launch $w={62}><IE /></Launch>
        <Launch $w={62}><Chrome /></Launch>
        <Launch $w={62}><Wmp /></Launch>
        <Launch $w={62}><Filezilla /></Launch>
        <Launch $w={63}><Paint /></Launch>
        <Running $on><Firefox /></Running>
        <Running><Explorer /></Running>
        <Running><Notepad /></Running>
        <Running><SkypeS s={32} fs={24} /></Running>
        <Tray>
          <Tri w={12} h={4} d="M4 0l4 4H0z" c="#fff" />
          <svg width="16" height="16" viewBox="0 0 16 16"><path d="M1 5h11v10H1z" fill="#3c76b8" stroke="#173a63" /><path d="M1 4q3-3 6-1 3-3 6-1M4 8q3-4 9-2" stroke="#e9eef3" strokeWidth="1.600" fill="none" /><path d="M7 8h4v6H7z" fill="#81b5e4" /></svg>
          <svg width="16" height="16" viewBox="0 0 16 16"><circle cx="8" cy="8" r="6.500" fill="#7dbb00" /><circle cx="5" cy="5" r="4.200" fill="#7dbb00" /><circle cx="11" cy="11" r="4.200" fill="#7dbb00" /><path d="M4.500 8l2.500 2.500L11.500 6" stroke="#fff" strokeWidth="2" fill="none" /></svg>
          <svg width="16" height="16" viewBox="0 0 16 16"><path d="M2 1v14" stroke="#fff" strokeWidth="1.500" /><path d="M3 2q3-1 5 0t6 0v7q-4 1-6 0T3 9z" fill="#eef2f5" /><circle cx="11.500" cy="11" r="4.500" fill="#d8372c" /><path d="M9.700 9.200l3.600 3.600M13.300 9.200l-3.600 3.600" stroke="#fff" strokeWidth="1.400" /></svg>
          <svg width="16" height="16" viewBox="0 0 16 16"><rect x="1" y="1" width="14" height="14" rx="1.500" fill="#0b5a16" stroke="#0fa81d" strokeWidth="1.600" /><path d="M4 4v7q2 2 4 0V5v6q2 2 4 0V4" stroke="#11b721" strokeWidth="2" fill="none" /></svg>
          <svg width="16" height="14" viewBox="0 0 16 14"><path d="M2 12v2M5 10v4M8 7v7M11 4.500V14M14 2v12" stroke="#fff" strokeWidth="2" /></svg>
          <svg width="16" height="16" viewBox="0 0 16 16"><path d="M1 5.500h3L8 1.500v13l-4-4H1z" fill="#f2f4f6" /><path d="M10 5.500q1.500 2.500 0 5M12 3.500q3 4.500 0 9" stroke="#dfe6ec" strokeWidth="1.200" fill="none" /></svg>
          <Clock>2:40 PM<br />10/15/2014</Clock>
          <ShowDesktop />
        </Tray>
      </TaskBar>
    </Screen>
  );
}
